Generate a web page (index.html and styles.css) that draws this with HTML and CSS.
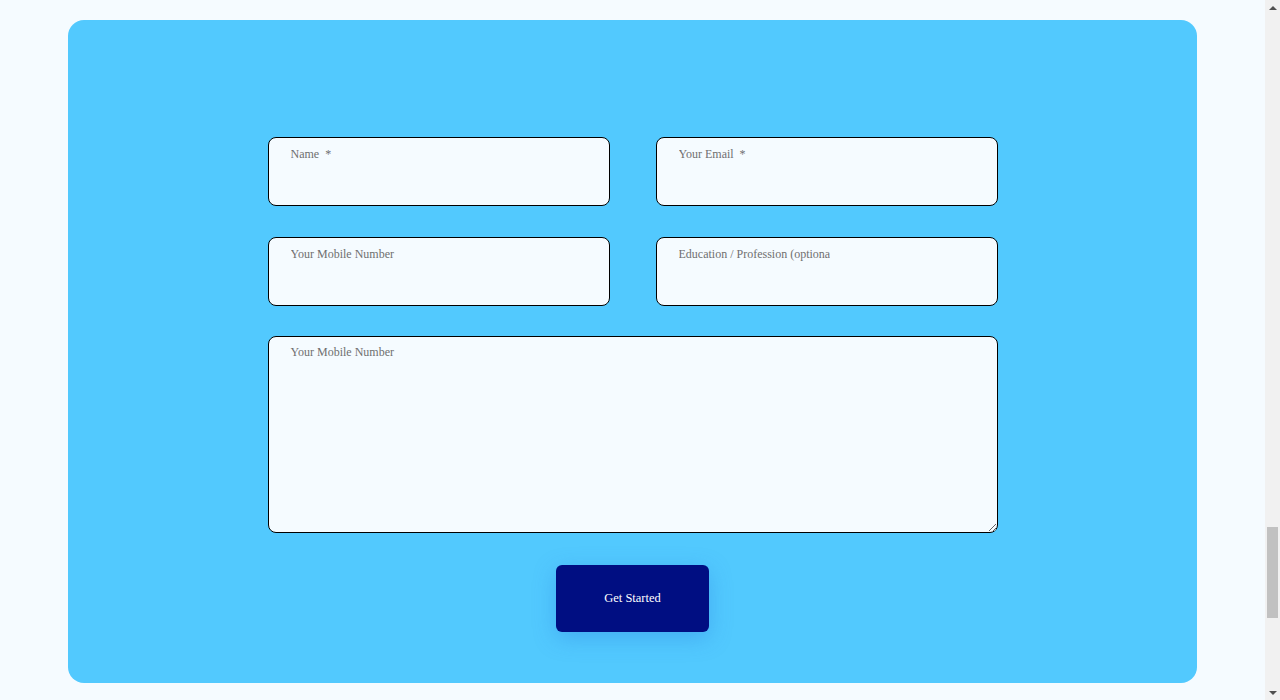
FILE: index.html
```html
<!DOCTYPE html>
<html lang="en">
<head>
    <meta charset="UTF-8">
    <meta name="viewport" content="width=device-width, initial-scale=1.0">
    <title>Contact</title>
    <link rel="stylesheet" href="styles.css">
</head>
<body>
    <main class="page">
        <section class="contact-card">
            <form class="contact-form">
                <div class="form-row">
                    <div class="field"><input type="text" placeholder="Name  *"></div>
                    <div class="field"><input type="email" placeholder="Your Email  *"></div>
                </div>
                <div class="form-row">
                    <div class="field"><input type="tel" placeholder="Your Mobile Number"></div>
                    <div class="field"><input type="text" placeholder="Education / Profession (optional)"></div>
                </div>
                <textarea class="message" placeholder="Your Mobile Number"></textarea>
                <button type="button" class="submit-button">Get Started</button>
            </form>
        </section>
    </main>

    <!-- page scrollbar, drawn as in the captured window -->
    <div class="scrollbar">
        <div class="scroll-arrow up"></div>
        <div class="scroll-track"><div class="scroll-thumb"></div></div>
        <div class="scroll-arrow down"></div>
    </div>
</body>
</html>
```

FILE: styles.css
```css
body {
    margin: 0;
    height: 100vh;
    overflow: hidden;
    display: flex;
    background: #f5fbff;
    font-family: "Liberation Serif", "Times New Roman", serif;
}
.page {
    flex: 1;
    padding: 20px 68px 17px;
}
.contact-card {
    height: 663px;
    box-sizing: border-box;
    padding-top: 117px;
    background: #52c9fe;
    border-radius: 16px;
}
.contact-form {
    width: 730px;
    margin: 0 auto;
    display: flex;
    flex-direction: column;
    align-items: center;
}
.form-row {
    width: 100%;
    display: flex;
    justify-content: space-between;
    margin-bottom: 31px;
}
.form-row + .form-row {
    margin-bottom: 30px;
}
.field {
    width: 342px;
    height: 69px;
    box-sizing: border-box;
    padding: 6px 22px;
    background: #f5fbff;
    border: 1px solid #000;
    border-radius: 8px;
}
.field input {
    width: 151px;
    padding: 0;
    border: none;
    outline: none;
    background: transparent;
    font-family: inherit;
    font-size: 12px;
    line-height: 16px;
}
.field input::placeholder,
.message::placeholder {
    color: #6f6f6f;
}
.message {
    width: 730px;
    height: 197px;
    box-sizing: border-box;
    padding: 7px 22px;
    background: #f5fbff;
    border: 1px solid #000;
    border-radius: 8px;
    font-family: inherit;
    font-size: 12px;
    line-height: 16px;
    outline: none;
    resize: vertical;
}
.submit-button {
    margin-top: 32px;
    width: 153px;
    height: 67px;
    background: #000e82;
    color: #fff;
    border: none;
    border-radius: 6px;
    font-family: inherit;
    font-size: 12.5px;
    box-shadow: 0 6px 22px rgba(40, 120, 220, 0.35);
    cursor: pointer;
}
.scrollbar {
    width: 15px;
    display: flex;
    flex-direction: column;
    background: #f1f1f1;
}
.scroll-arrow {
    height: 15px;
    display: flex;
    align-items: center;
    justify-content: center;
}
.scroll-arrow::before {
    content: "";
    border-left: 4px solid transparent;
    border-right: 4px solid transparent;
}
.scroll-arrow.up::before {
    border-bottom: 4px solid #505050;
}
.scroll-arrow.down::before {
    border-top: 4px solid #505050;
}
.scroll-track {
    flex: 1;
}
.scroll-thumb {
    margin: 512px 2px 0;
    height: 91px;
    background: #c1c1c1;
}
```
